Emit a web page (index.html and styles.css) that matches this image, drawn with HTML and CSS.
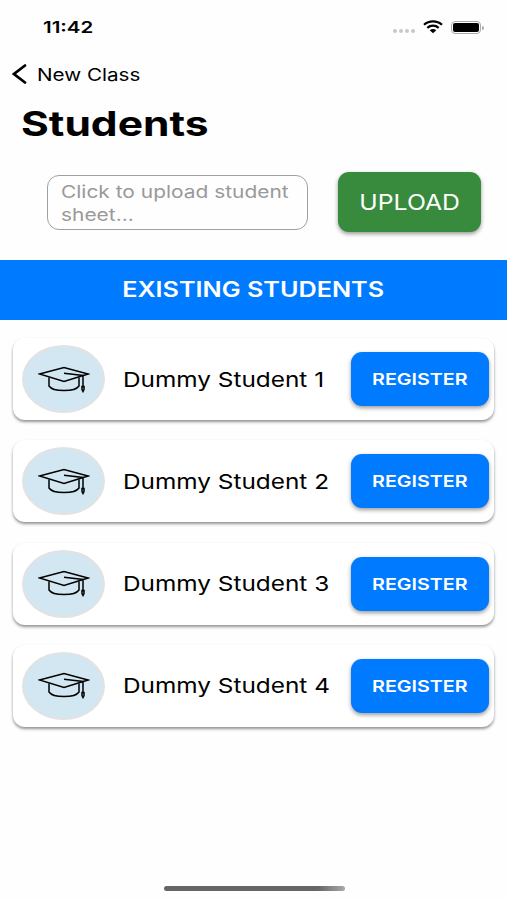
FILE: index.html
```html
<!DOCTYPE html>
<html lang="en">
<head>
  <meta charset="UTF-8" />
  <meta name="viewport" content="width=device-width, initial-scale=1.0"/>
  <title>Students</title>
  <link rel="stylesheet" href="styles.css">
</head>
<body>
  <svg width="0" height="0" class="symbols">
    <symbol id="cap" viewBox="0 0 52 27">
      <path d="M1.500 8 26 1.500 50 8l-24 7.500z M26 7.200l19 2.300v12" />
      <path d="M11 11.500v8.500c4 6 26 6 30 0v-8.500" />
      <path d="M44 20.500h2v3l-1 2-1-2z" />
    </symbol>
  </svg>

  <div class="status-bar">
    <span class="time"><span class="wide">11:42</span></span>
    <div class="status-icons">
      <div class="dots"><i></i><i></i><i></i><i></i></div>
      <svg class="wifi" width="20" height="14" viewBox="0 0 20 14">
        <path d="M1 4.700C6 .2 14 .2 19 4.700M4.300 7.800c3.300-2.900 8.100-2.900 11.400 0" />
        <path class="fill" d="M6.700 10.200c2-1.700 4.600-1.700 6.600 0L10 13.200z" />
      </svg>
      <div class="battery"><div></div></div>
    </div>
  </div>

  <div class="back">
    <svg width="15" height="20" viewBox="0 0 15 20"><path d="M13 1.500 2 10l11 8.500" /></svg>
    <span class="wide">New Class</span>
  </div>
  <h1><span class="wide">Students</span></h1>

  <div class="upload-row">
    <div class="file-input"><span class="wide">Click to upload student<br>sheet...</span></div>
    <button class="upload"><span class="wide">UPLOAD</span></button>
  </div>

  <h2><span class="wide">EXISTING STUDENTS</span></h2>

  <div class="student-list">
    <div class="student">
      <div class="avatar"><svg><use href="#cap" /></svg></div>
      <div class="name"><span class="wide">Dummy Student 1</span></div>
      <button class="register"><span class="wide">REGISTER</span></button>
    </div>
    <div class="student">
      <div class="avatar"><svg><use href="#cap" /></svg></div>
      <div class="name"><span class="wide">Dummy Student 2</span></div>
      <button class="register"><span class="wide">REGISTER</span></button>
    </div>
    <div class="student">
      <div class="avatar"><svg><use href="#cap" /></svg></div>
      <div class="name"><span class="wide">Dummy Student 3</span></div>
      <button class="register"><span class="wide">REGISTER</span></button>
    </div>
    <div class="student">
      <div class="avatar"><svg><use href="#cap" /></svg></div>
      <div class="name"><span class="wide">Dummy Student 4</span></div>
      <button class="register"><span class="wide">REGISTER</span></button>
    </div>
  </div>

  <div class="home-bar"></div>
</body>
</html>
```
FILE: styles.css
```css
* {
  box-sizing: border-box;
}

body {
  font-family: Inter, 'Liberation Sans', sans-serif;
  margin: 0;
  height: 900px;
  display: flex;
  flex-direction: column;
  background: #fefefe;
  color: #000;
  overflow: hidden;
}

svg {
  fill: none;
  stroke: #000;
  display: block;
  flex-shrink: 0;
}

.symbols {
  display: none;
}

.wide {
  display: inline-block;
  white-space: nowrap;
  transform: scaleX(1.18);
  transform-origin: left center;
}

button {
  border: 0;
  padding: 0;
  font-family: inherit;
  color: #fff;
}

button .wide, h2 .wide {
  transform-origin: center;
}

.status-bar {
  height: 54px;
  padding: 0 26px 0 43px;
  display: flex;
  justify-content: space-between;
  align-items: center;
}

.time {
  font-size: 16px;
  font-weight: 600;
}

.time .wide {
  transform: scaleX(1.28);
}

.status-icons {
  display: flex;
  align-items: center;
}

.dots {
  display: flex;
  gap: 2px;
  margin: 8px 8px 0 0;
}

.dots i {
  width: 4px;
  height: 4px;
  border-radius: 50%;
  background: #c8c8c8;
}

.wifi {
  stroke-width: 2.2;
  margin-right: 8px;
}

.wifi .fill {
  fill: #000;
  stroke: none;
}

.battery {
  width: 30px;
  height: 13px;
  padding: 1px;
  border: 1px solid #aaa;
  border-radius: 4px;
  position: relative;
}

.battery div {
  height: 100%;
  border-radius: 2px;
  background: #000;
}

.battery::after {
  content: '';
  position: absolute;
  right: -4px;
  top: 4px;
  width: 2px;
  height: 4px;
  border-radius: 0 2px 2px 0;
  background: #aaa;
}

.back {
  height: 40px;
  padding-left: 12px;
  display: flex;
  align-items: center;
  gap: 10px;
  font-size: 17.5px;
}

.back svg {
  stroke-width: 2.7;
  stroke-linecap: round;
}

h1 {
  margin: 0;
  padding-left: 21px;
  height: 59px;
  line-height: 59px;
  font-size: 34px;
  font-weight: 700;
}

h1 .wide {
  transform: scaleX(1.25);
}

.upload-row {
  height: 107px;
  padding: 19px 26px 0 47px;
  display: flex;
  justify-content: space-between;
  align-items: flex-start;
}

.file-input {
  width: 261px;
  height: 55px;
  margin-top: 3px;
  padding: 4px 13px;
  border: 1px solid #a0a0a0;
  border-radius: 12px;
  font-size: 17.5px;
  line-height: 23px;
  color: #999;
}

.file-input .wide {
  transform: scaleX(1.195);
}

.upload {
  width: 143px;
  height: 60px;
  border-radius: 11px;
  background: #388b3d;
  box-shadow: 0 2px 4px rgba(0, 0, 0, 0.4);
  font-size: 21px;
}

h2 {
  margin: 0;
  height: 60px;
  line-height: 60px;
  background: #007aff;
  color: #fff;
  text-align: center;
  font-size: 21px;
  font-weight: 600;
}

h2 .wide {
  transform: scaleX(1.2);
}

.student-list {
  padding: 18px 13px 0 13px;
  display: flex;
  flex-direction: column;
  gap: 20.3px;
}

.student {
  height: 82px;
  padding: 0 5px 0 9px;
  display: flex;
  align-items: center;
  background: #fff;
  border-radius: 12px;
  box-shadow: 0 2px 3px rgba(0, 0, 0, 0.42);
}

.avatar {
  width: 83px;
  height: 68px;
  border: 2px solid #e2e2e2;
  border-radius: 50%;
  background: #d3e7f2;
  display: flex;
  align-items: center;
  justify-content: center;
}

.avatar svg {
  width: 52px;
  height: 27px;
  stroke-width: 1.5;
}

.name {
  flex: 1;
  padding-left: 18px;
  font-size: 20.5px;
}

.name .wide {
  transform: scaleX(1.188);
}

.register {
  width: 138px;
  height: 54px;
  border-radius: 11px;
  background: #007aff;
  box-shadow: 0 2px 4px rgba(0, 0, 0, 0.4);
  font-size: 16px;
  font-weight: 600;
}

.register .wide {
  transform: scaleX(1.23);
}

.home-bar {
  width: 181px;
  height: 5px;
  margin: auto auto 9px 164px;
  border-radius: 3px;
  background: linear-gradient(to right, #666 85%, #aaa);
}
```
